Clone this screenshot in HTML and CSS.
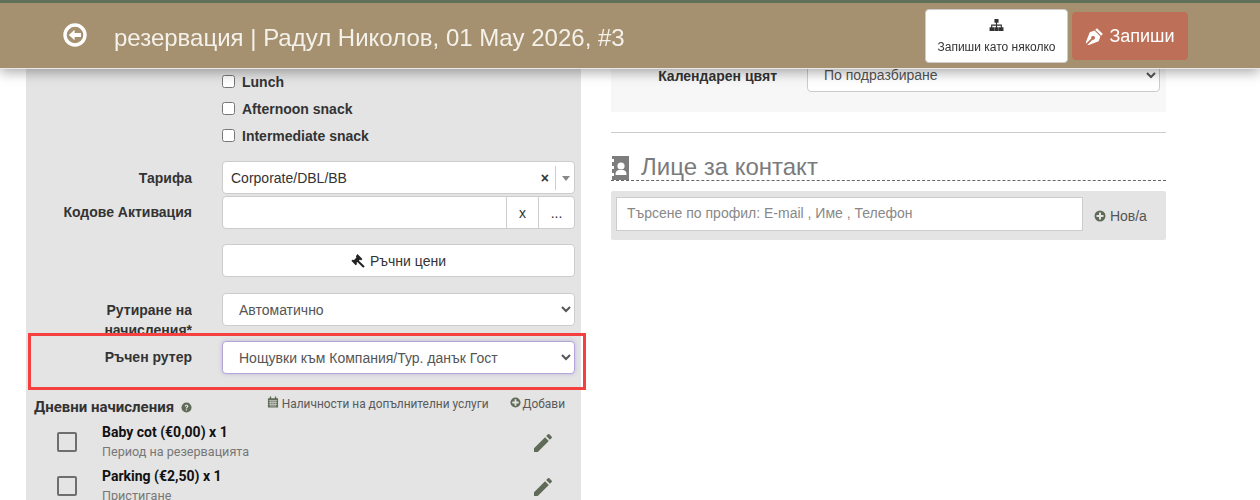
FILE: index.html
```html
<!DOCTYPE html>
<html lang="en">
<head>
  <meta charset="UTF-8">
  <title>Резервация</title>
  <link rel="stylesheet" href="styles.css">
</head>
<body>
  <header class="topbar">
    <svg class="back-icon" viewBox="0 0 24 24" width="24" height="24">
      <circle cx="12" cy="12" r="10" fill="none" stroke="#fff" stroke-width="3.4"/>
      <path d="M5.8 12 11.6 6.8V10H18V14H11.6V17.2Z" fill="#fff"/>
    </svg>
    <h1 class="title">резервация | Радул Николов, 01 May 2026, #3</h1>
    <div class="actions">
      <button class="btn-multi">
        <svg viewBox="0 0 16 14" width="15" height="13">
          <path d="M5.8 0H10.2V4H8.6V6H13.8V9H15.5V13H10.7V9H12.6V7.2H8.6V9H10.4V13H5.6V9H7.4V7.2H3.4V9H5.3V13H.5V9H2.2V6H7.4V4H5.8Z" fill="#333"/>
        </svg>
        <span>Запиши като няколко</span>
      </button>
      <button class="btn-save">
        <svg viewBox="0 0 20 20" width="19" height="19">
          <path d="M12.6 1.2 18.8 7.4 17 9.2 10.8 3Z M10 3.8 16.2 10 14.4 15 4.2 19 2.4 19 8 13.4A2 2 0 1 0 6.6 12L1 17.6V15.8L5 5.6Z" fill="#fff"/>
        </svg>
        <span>Запиши</span>
      </button>
    </div>
  </header>

  <main class="columns">
    <section class="panel">
      <div class="checks">
        <label class="check"><input type="checkbox"> Lunch</label>
        <label class="check"><input type="checkbox"> Afternoon snack</label>
        <label class="check"><input type="checkbox"> Intermediate snack</label>
      </div>

      <div class="row row-tariff">
        <div class="label">Тарифа</div>
        <div class="combo">
          <span class="combo-text">Corporate/DBL/BB</span>
          <span class="combo-x">×</span>
          <span class="combo-arrow"></span>
        </div>
      </div>

      <div class="row row-codes">
        <div class="label">Кодове Активация</div>
        <div class="group">
          <input class="group-input" type="text">
          <span class="group-btn group-x">x</span>
          <span class="group-btn group-more">...</span>
        </div>
      </div>

      <div class="row row-manual">
        <div class="label"></div>
        <button class="btn-manual">
          <svg viewBox="0 0 16 16" width="15" height="15">
            <path d="M6.8 1 12.2 6.4 10.6 8 9.6 7 8.4 8.2 14.6 14.2 13 15.6 6.8 9.6 5.8 10.6 6.6 11.6 5 13 .4 8.4 2 6.8 3 7.6 6 4.6 5.2 3.6 Z" fill="#222"/>
          </svg>
          Ръчни цени
        </button>
      </div>

      <div class="row row-routing">
        <div class="label">Рутиране на начисления*</div>
        <select class="select"><option>Автоматично</option></select>
      </div>

      <div class="row row-router">
        <div class="label">Ръчен рутер</div>
        <select class="select select-focus"><option>Нощувки към Компания/Тур. данък Гост</option></select>
      </div>

      <div class="extras-head">
        <div class="extras-title">
          Дневни начисления
          <svg viewBox="0 0 12 12" width="11" height="11">
            <circle cx="6" cy="6" r="5.5" fill="#5f6b57"/>
            <path d="M4 4.6C4 2.4 8 2.4 8 4.6 8 6 6.6 5.8 6.6 7.2H5.3C5.3 5.4 6.6 5.4 6.6 4.6 6.6 4 5.4 4 5.3 4.8ZM5.3 8H6.6V9.4H5.3Z" fill="#e4e4e4"/>
          </svg>
        </div>
        <a class="extras-link extras-avail">
          <svg viewBox="0 0 13 13" width="12" height="12">
            <path d="M1 2.5H12V12.5H1ZM3 .5H4.5V3.5H3ZM8.5 .5H10V3.5H8.5Z" fill="#5f6b57"/>
            <path d="M2 5H11M2 7.2H11M2 9.4H11M4.2 5V12M6.5 5V12M8.8 5V12" stroke="#e4e4e4" stroke-width=".7"/>
          </svg>
          Наличности на допълнителни услуги
        </a>
        <a class="extras-link extras-add">
          <svg viewBox="0 0 12 12" width="11" height="11">
            <circle cx="6" cy="6" r="5.5" fill="#5f6b57"/>
            <path d="M5 2.5H7V5H9.5V7H7V9.5H5V7H2.5V5H5Z" fill="#e4e4e4"/>
          </svg>
          Добави
        </a>
      </div>

      <div class="extra">
        <span class="extra-box"></span>
        <div class="extra-body">
          <div class="extra-name">Baby cot (€0,00) x 1</div>
          <div class="extra-sub">Период на резервацията</div>
        </div>
        <svg class="extra-edit" viewBox="0 0 24 24" width="24" height="24">
          <path d="M3 17.25V21H6.75L17.81 9.94 14.06 6.19ZM20.71 7.04A1 1 0 0 0 20.71 5.63L18.37 3.29A1 1 0 0 0 16.96 3.29L15.13 5.12 18.88 8.87Z" fill="#5f6b57"/>
        </svg>
      </div>
      <div class="extra">
        <span class="extra-box"></span>
        <div class="extra-body">
          <div class="extra-name">Parking (€2,50) x 1</div>
          <div class="extra-sub">Пристигане</div>
        </div>
        <svg class="extra-edit" viewBox="0 0 24 24" width="24" height="24">
          <path d="M3 17.25V21H6.75L17.81 9.94 14.06 6.19ZM20.71 7.04A1 1 0 0 0 20.71 5.63L18.37 3.29A1 1 0 0 0 16.96 3.29L15.13 5.12 18.88 8.87Z" fill="#5f6b57"/>
        </svg>
      </div>
    </section>

    <section class="side">
      <div class="side-card">
        <div class="label side-label">Календарен цвят</div>
        <select class="select side-select"><option>По подразбиране</option></select>
      </div>
      <hr class="side-rule">
      <h2 class="contact-title">
        <svg viewBox="0 0 18 24" width="18" height="24">
          <rect x="1" width="17" height="24" fill="#7d7d7d"/>
          <path d="M0 3H3V6H0ZM0 10H3V13H0ZM0 17H3V20H0Z" fill="#fff"/>
          <circle cx="10" cy="10" r="3.6" fill="#fff"/>
          <path d="M4.5 19C4.5 14 7 14 10 14S15.5 14 15.5 19Z" fill="#fff"/>
        </svg>
        Лице за контакт
      </h2>
      <div class="contact-search">
        <input class="contact-input" type="text" placeholder="Търсене по профил: E-mail , Име , Телефон">
        <a class="contact-new">
          <svg viewBox="0 0 12 12" width="12" height="12">
            <circle cx="6" cy="6" r="5.5" fill="#5f6b57"/>
            <path d="M5 2.5H7V5H9.5V7H7V9.5H5V7H2.5V5H5Z" fill="#e4e4e4"/>
          </svg>
          Нов/а
        </a>
      </div>
    </section>
  </main>
</body>
</html>
```

FILE: styles.css
```css
* {
  box-sizing: border-box;
}
html, body {
  height: 500px;
  overflow: hidden;
}
body {
  margin: 0;
  font-family: "Liberation Sans", Arial, sans-serif;
  font-size: 14px;
  color: #333;
  background: #fff;
}

/* top bar */
.topbar {
  position: fixed;
  top: 0;
  left: 0;
  right: 0;
  z-index: 10;
  height: 69px;
  display: flex;
  align-items: center;
  padding-left: 63px;
  background: #a59170;
  border-top: 3px solid #5f6f58;
  border-bottom: 1px solid #e8e8e8;
  box-shadow: 0 3px 12px rgba(0, 0, 0, .35);
}
.back-icon {
  flex: none;
  margin-top: -1px;
}
.title {
  margin: 4px 0 0 27px;
  font-size: 24px;
  font-weight: 400;
  color: #f4f1ea;
  white-space: nowrap;
}
.actions {
  margin-left: auto;
  margin-right: 72px;
  display: flex;
  align-items: center;
  gap: 4px;
  margin-top: 1px;
}
.btn-multi {
  width: 143px;
  height: 54px;
  padding: 0;
  display: flex;
  flex-direction: column;
  align-items: center;
  justify-content: center;
  gap: 8px;
  font: 12px "Liberation Sans", Arial, sans-serif;
  color: #333;
  background: #fff;
  border: 1px solid #ccc;
  border-radius: 4px;
}
.btn-save {
  width: 116px;
  height: 48px;
  padding: 0;
  display: flex;
  align-items: center;
  justify-content: center;
  gap: 5px;
  font: 18px "Liberation Sans", Arial, sans-serif;
  color: #fff;
  background: #bd6f57;
  border: 0;
  border-radius: 4px;
}

/* columns */
.columns {
  display: flex;
  align-items: flex-start;
  gap: 30px;
  padding: 0 0 0 26px;
}
.panel {
  width: 555px;
  height: 500px;
  flex: none;
  padding-top: 68px;
  background: #e4e4e4;
}
.side {
  width: 555px;
  flex: none;
  padding-top: 69px;
}

/* checkboxes */
.checks {
  padding: 0 0 0 196px;
}
.check {
  display: flex;
  align-items: center;
  gap: 7px;
  height: 27px;
  font-weight: 700;
}
.check input {
  width: 13px;
  height: 13px;
  margin: 0;
}

/* form rows */
.row {
  display: grid;
  grid-template-columns: 166px 353px;
  column-gap: 30px;
  align-items: start;
}
.label {
  font-weight: 700;
  text-align: right;
  line-height: 20px;
  padding-top: 6px;
}
.row-tariff {
  margin-top: 12px;
}
.row-tariff .label {
  padding-top: 7px;
}
.row-codes {
  margin-top: 2px;
}
.row-manual {
  margin-top: 15px;
}
.row-routing {
  margin-top: 16px;
  height: 48px;
}
.row-router {
  position: relative;
  height: 33px;
  z-index: 1;
}
.row-router::after {
  content: "";
  position: absolute;
  left: 2px;
  right: -5px;
  top: -8px;
  bottom: -16px;
  border: 3px solid #f54040;
  pointer-events: none;
}
.row-routing .label {
  height: 48px;
  padding-top: 7px;
  overflow: hidden;
}
.combo, .group, .select, .btn-manual {
  height: 33px;
  border: 1px solid #ccc;
  border-radius: 4px;
  background: #fff;
}
.combo {
  display: flex;
  align-items: center;
  padding-left: 8px;
}
.combo-text {
  flex: 1;
}
.combo-x {
  font-weight: 700;
  font-size: 14px;
  color: #333;
  margin-right: 6px;
}
.combo-arrow {
  width: 19px;
  height: 24px;
  border-left: 1px solid #ccc;
  position: relative;
}
.combo-arrow::after {
  content: "";
  position: absolute;
  left: 6px;
  top: 10px;
  border: 4px solid transparent;
  border-top: 5px solid #888;
  border-bottom: 0;
}
.group {
  display: flex;
}
.group-input {
  flex: 1;
  min-width: 0;
  border: 0;
  background: transparent;
}
.group-btn {
  display: flex;
  align-items: center;
  justify-content: center;
  border-left: 1px solid #ccc;
}
.group-x {
  width: 32px;
}
.group-more {
  width: 36px;
}
.btn-manual {
  display: flex;
  align-items: center;
  justify-content: center;
  gap: 4px;
  padding: 0;
  font: 14px "Liberation Sans", Arial, sans-serif;
  color: #333;
}
.select {
  width: 100%;
  padding: 0 12px;
  font: 14px "Liberation Sans", Arial, sans-serif;
  color: #555;
}
.select-focus {
  border-color: #b5a6d8;
  box-shadow: 0 0 4px rgba(120, 100, 200, .35);
}

/* daily charges */
.extras-head {
  display: flex;
  align-items: flex-start;
  margin-top: 23px;
  margin-bottom: 5px;
  padding: 0 16px 0 8px;
  font-family: Roboto, sans-serif;
}
.extras-title {
  font-weight: 700;
  font-size: 15px;
  line-height: 20px;
  color: #333;
}
.extras-title svg {
  margin-left: 3px;
  vertical-align: -1px;
}
.extras-link {
  margin-top: -1px;
  font-size: 11.9px;
  line-height: 16px;
  color: #5a5a5a;
}
.extras-avail {
  margin-left: auto;
}
.extras-add {
  margin-left: 21px;
}
.extras-add svg {
  margin-right: -1px;
}
.extra {
  display: flex;
  align-items: flex-start;
  height: 44px;
  padding-left: 31px;
  font-family: Roboto, sans-serif;
}
.extra-box {
  flex: none;
  width: 20px;
  height: 20px;
  margin-top: 10px;
  border: 2px solid #6e6e6e;
  border-radius: 2px;
}
.extra-body {
  flex: 1;
  padding-left: 25px;
}
.extra-name {
  font-weight: 700;
  font-size: 14px;
  line-height: 20px;
  color: #111;
}
.extra-sub {
  font-size: 12.6px;
  line-height: 20px;
  color: #777;
}
.extra-edit {
  flex: none;
  margin: 9px 26px 0 0;
}

/* right column */
.side-card {
  display: grid;
  grid-template-columns: 166px 353px;
  column-gap: 30px;
  height: 43px;
  background: #f7f7f7;
}
.side-label {
  padding-top: 0;
  margin-top: -3px;
}
.side-select {
  margin-top: -11px;
  height: 34px;
  padding: 0 12px;
}
.side-rule {
  margin: 20px 0 0;
  border: 0;
  border-top: 1px solid #ccc;
}
.contact-title {
  margin: 20px 0 0;
  height: 28px;
  display: flex;
  align-items: flex-end;
  gap: 12px;
  font-size: 24px;
  line-height: 26px;
  font-weight: 400;
  color: #7b7b7b;
  border-bottom: 1px dashed #666;
}
.contact-search {
  display: flex;
  align-items: flex-start;
  margin-top: 10px;
  height: 49px;
  padding: 6px 5px 0;
  background: #e4e4e4;
  border-radius: 2px;
}
.contact-input {
  width: 467px;
  height: 34px;
  padding: 0 10px 2px;
  font: 14px "Liberation Sans", Arial, sans-serif;
  border: 1px solid #ccc;
}
.contact-input::placeholder {
  color: #888;
}
.contact-new {
  margin-left: 11px;
  margin-top: 11px;
  color: #555;
}
.contact-new svg {
  vertical-align: -1px;
}
```
